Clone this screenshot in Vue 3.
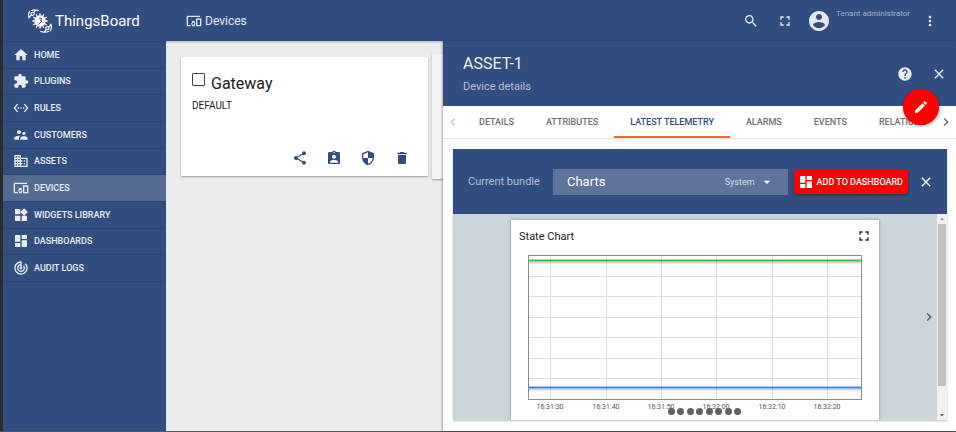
<script setup>
import { ref } from 'vue'

const icons = {
  home: 'M10 20v-6h4v6h5v-8h3L12 3 2 12h3v8z',
  extension: 'M20.5 11H19V7c0-1.1-.9-2-2-2h-4V3.5C13 2.12 11.88 1 10.5 1S8 2.12 8 3.5V5H4c-1.1 0-1.99.9-1.99 2v3.8H3.5c1.49 0 2.7 1.21 2.7 2.7s-1.21 2.7-2.7 2.7H2V20c0 1.1.9 2 2 2h3.8v-1.5c0-1.49 1.21-2.7 2.7-2.7 1.49 0 2.7 1.21 2.7 2.7V22H17c1.1 0 2-.9 2-2v-4h1.5c1.38 0 2.5-1.12 2.5-2.5S21.88 11 20.5 11z',
  ethernet: 'M7.77 6.76L6.23 5.48.82 12l5.41 6.52 1.54-1.28L3.42 12l4.35-5.24zM7 13h2v-2H7v2zm10-2h-2v2h2v-2zm-6 2h2v-2h-2v2zm6.77-7.52l-1.54 1.28L20.58 12l-4.35 5.24 1.54 1.28L23.18 12l-5.41-6.52z',
  supervisor: 'M16.5 12c1.38 0 2.49-1.12 2.49-2.5S17.88 7 16.5 7C15.12 7 14 8.12 14 9.5s1.12 2.5 2.5 2.5zM9 11c1.66 0 2.99-1.34 2.99-3S10.66 5 9 5C7.34 5 6 6.34 6 8s1.34 3 3 3zm7.5 3c-1.83 0-5.5.92-5.5 2.75V19h11v-2.25c0-1.83-3.67-2.75-5.5-2.75zM9 13c-2.33 0-7 1.17-7 3.5V19h7v-2.25c0-.85.33-2.34 2.37-3.47C10.5 13.1 9.66 13 9 13z',
  domain: 'M12 7V3H2v18h20V7H12zM6 19H4v-2h2v2zm0-4H4v-2h2v2zm0-4H4V9h2v2zm0-4H4V5h2v2zm4 12H8v-2h2v2zm0-4H8v-2h2v2zm0-4H8V9h2v2zm0-4H8V5h2v2zm10 12h-8v-2h2v-2h-2v-2h2v-2h-2V9h8v10zm-2-8h-2v2h2v-2zm0 4h-2v2h2v-2z',
  devices: 'M3 6h18V4H3c-1.1 0-2 .9-2 2v12c0 1.1.9 2 2 2h4v-2H3V6zm10 6H9v1.78c-.61.55-1 1.33-1 2.22s.39 1.67 1 2.22V20h4v-1.78c.61-.55 1-1.34 1-2.22s-.39-1.67-1-2.22V12zm-2 5.5c-.83 0-1.5-.67-1.5-1.5s.67-1.5 1.5-1.5 1.5.67 1.5 1.5-.67 1.5-1.5 1.5zM22 8h-6c-.5 0-1 .5-1 1v10c0 .5.5 1 1 1h6c.5 0 1-.5 1-1V9c0-.5-.5-1-1-1zm-1 10h-4v-8h4v8z',
  widgets: 'M13 13v8h8v-8h-8zM3 21h8v-8H3v8zM3 3v8h8V3H3zm13.66-1.31L11 7.34 16.66 13l5.66-5.66-5.66-5.65z',
  dashboard: 'M3 13h8V3H3v10zm0 8h8v-6H3v6zm10 0h8V11h-8v10zm0-18v6h8V3h-8z',
  track: 'M19.07 4.93l-1.41 1.41C19.1 7.79 20 9.79 20 12c0 4.42-3.58 8-8 8s-8-3.58-8-8c0-4.08 3.05-7.44 7-7.93v2.02C8.16 6.57 6 9.03 6 12c0 3.31 2.69 6 6 6s6-2.69 6-6c0-1.66-.67-3.16-1.76-4.24l-1.41 1.41C15.55 9.9 16 10.9 16 12c0 2.21-1.79 4-4 4s-4-1.79-4-4c0-1.86 1.28-3.41 3-3.86v2.14c-.6.35-1 .98-1 1.72 0 1.1.9 2 2 2s2-.9 2-2c0-.74-.4-1.38-1-1.72V2h-1C6.48 2 2 6.48 2 12s4.48 10 10 10 10-4.48 10-10c0-2.76-1.12-5.26-2.93-7.07z',
  search: 'M15.5 14h-.79l-.28-.27C15.41 12.59 16 11.11 16 9.5 16 5.91 13.09 3 9.5 3S3 5.91 3 9.5 5.91 16 9.5 16c1.61 0 3.09-.59 4.23-1.57l.27.28v.79l5 4.99L20.49 19l-4.99-5zm-6 0C7.01 14 5 11.99 5 9.5S7.01 5 9.5 5 14 7.01 14 9.5 11.99 14 9.5 14z',
  fullscreen: 'M7 14H5v5h5v-2H7v-3zm-2-4h2V7h3V5H5v5zm12 7h-3v2h5v-5h-2v3zM14 5v2h3v3h2V5h-5z',
  account: 'M12 2C6.48 2 2 6.48 2 12s4.48 10 10 10 10-4.48 10-10S17.52 2 12 2zm0 3c1.66 0 3 1.34 3 3s-1.34 3-3 3-3-1.34-3-3 1.34-3 3-3zm0 14.2c-2.5 0-4.71-1.28-6-3.22.03-1.99 4-3.08 6-3.08 1.99 0 5.97 1.09 6 3.08-1.29 1.94-3.5 3.22-6 3.22z',
  more: 'M12 8c1.1 0 2-.9 2-2s-.9-2-2-2-2 .9-2 2 .9 2 2 2zm0 2c-1.1 0-2 .9-2 2s.9 2 2 2 2-.9 2-2-.9-2-2-2zm0 6c-1.1 0-2 .9-2 2s.9 2 2 2 2-.9 2-2-.9-2-2-2z',
  help: 'M12 2C6.48 2 2 6.48 2 12s4.48 10 10 10 10-4.48 10-10S17.52 2 12 2zm1 17h-2v-2h2v2zm2.07-7.75l-.9.92C13.45 12.9 13 13.5 13 15h-2v-.5c0-1.1.45-2.1 1.17-2.83l1.24-1.26c.37-.36.59-.86.59-1.41 0-1.1-.9-2-2-2s-2 .9-2 2H8c0-2.21 1.79-4 4-4s4 1.79 4 4c0 .88-.36 1.68-.93 2.25z',
  close: 'M19 6.41L17.59 5 12 10.59 6.41 5 5 6.41 10.59 12 5 17.59 6.41 19 12 13.41 17.59 19 19 17.59 13.41 12z',
  edit: 'M3 17.25V21h3.75L17.81 9.94l-3.75-3.75L3 17.25zM20.71 7.04c.39-.39.39-1.02 0-1.41l-2.34-2.34c-.39-.39-1.02-.39-1.41 0l-1.83 1.83 3.75 3.75 1.83-1.83z',
  share: 'M18 16.08c-.76 0-1.44.3-1.96.77L8.91 12.7c.05-.23.09-.46.09-.7s-.04-.47-.09-.7l7.05-4.11c.54.5 1.25.81 2.04.81 1.66 0 3-1.34 3-3s-1.34-3-3-3-3 1.34-3 3c0 .24.04.47.09.7L8.04 9.81C7.5 9.31 6.79 9 6 9c-1.66 0-3 1.34-3 3s1.34 3 3 3c.79 0 1.5-.31 2.04-.81l7.12 4.16c-.05.21-.08.43-.08.65 0 1.61 1.31 2.92 2.92 2.92 1.61 0 2.92-1.31 2.92-2.92s-1.31-2.92-2.92-2.92z',
  assign: 'M19 3h-4.18C14.4 1.84 13.3 1 12 1c-1.3 0-2.4.84-2.82 2H5c-1.1 0-2 .9-2 2v14c0 1.1.9 2 2 2h14c1.1 0 2-.9 2-2V5c0-1.1-.9-2-2-2zm-7 0c.55 0 1 .45 1 1s-.45 1-1 1-1-.45-1-1 .45-1 1-1zm0 4c1.66 0 3 1.34 3 3s-1.34 3-3 3-3-1.34-3-3 1.34-3 3-3zm6 12H6v-1.4c0-2 4-3.1 6-3.1s6 1.1 6 3.1V19z',
  security: 'M12 1L3 5v6c0 5.55 3.84 10.74 9 12 5.16-1.26 9-6.45 9-12V5l-9-4zm0 10.99h7c-.53 4.12-3.28 7.79-7 8.94V12H5V6.3l7-3.11v8.8z',
  trash: 'M6 19c0 1.1.9 2 2 2h8c1.1 0 2-.9 2-2V7H6v12zM19 4h-3.5l-1-1h-5l-1 1H5v2h14V4z',
  left: 'M15.41 7.41L14 6l-6 6 6 6 1.41-1.41L10.83 12z',
  right: 'M10 6L8.59 7.41 13.17 12l-4.58 4.59L10 18l6-6z',
  down: 'M7 10l5 5 5-5z',
  up: 'M7 14l5-5 5 5z'
}

const menu = [
  { label: 'HOME', icon: 'home' },
  { label: 'PLUGINS', icon: 'extension' },
  { label: 'RULES', icon: 'ethernet' },
  { label: 'CUSTOMERS', icon: 'supervisor' },
  { label: 'ASSETS', icon: 'domain' },
  { label: 'DEVICES', icon: 'devices' },
  { label: 'WIDGETS LIBRARY', icon: 'widgets' },
  { label: 'DASHBOARDS', icon: 'dashboard' },
  { label: 'AUDIT LOGS', icon: 'track' }
]

const cardActions = [
  { label: 'Share', icon: 'share' },
  { label: 'Assign to customer', icon: 'assign' },
  { label: 'Manage credentials', icon: 'security' },
  { label: 'Delete', icon: 'trash' }
]

const tabs = ['DETAILS', 'ATTRIBUTES', 'LATEST TELEMETRY', 'ALARMS', 'EVENTS', 'RELATIONS']
const activeTab = ref('LATEST TELEMETRY')
const bundle = ref('Charts')
const selected = ref(false)

const ticks = [
  { x: 22, label: '16:31:30' },
  { x: 78, label: '16:31:40' },
  { x: 133, label: '16:31:50' },
  { x: 188, label: '16:32:00' },
  { x: 244, label: '16:32:10' },
  { x: 299, label: '16:32:20' }
]
const rows = [21, 41, 62, 82, 103, 123]
const teeth = Array.from({ length: 12 }, (_, i) => i * 30)
</script>

<template>
  <div class="shell">
    <div class="edge"></div>

    <aside class="sidebar">
      <a class="brand" href="#home">
        <svg class="logo" viewBox="0 0 24 24" aria-hidden="true">
          <g fill="none" stroke="#fff" stroke-linecap="round">
            <circle cx="4.6" cy="4.8" r="1.6" stroke-width="1.1" />
            <path d="M1 8.8C.4 6.5.6 4 1.700 2.200M5.800 3.600L7.300 1.500M3.400 1.500C5.500.7 8 .8 10.300 1.600M3.300 5.900L1.300 8.400" stroke-width="1.2" />
            <circle cx="19.4" cy="19.2" r="1.6" stroke-width="1.1" />
            <path d="M23 15.200C23.600 17.500 23.400 20 22.300 21.800M18.200 20.400L16.700 22.500M20.600 22.500C18.500 23.300 15.500 23.400 12.700 22.500M20.700 18.100L22.700 15.600" stroke-width="1.2" />
            <path v-for="t in teeth" :key="t" d="M12 4.800V8" stroke-width="1.3" :transform="`rotate(${t} 12 12)`" />
          </g>
          <circle cx="12" cy="12" r="5.7" fill="#fff" />
          <path d="M11 9L13.600 9.500 12.600 11.500 14 12 10.700 15.300" fill="none" stroke="#324d80" stroke-width="1" />
        </svg>
        <span>ThingsBoard</span>
      </a>
      <nav class="menu">
        <a v-for="item in menu" :key="item.label" href="#" class="menu-item" :class="{ active: item.label === 'DEVICES' }">
          <svg class="icon" viewBox="0 0 24 24"><path :d="icons[item.icon]" /></svg>
          <span>{{ item.label }}</span>
        </a>
      </nav>
    </aside>

    <div class="main">
      <header class="topbar">
        <h1 class="page-title">
          <svg class="icon" viewBox="0 0 24 24"><path :d="icons.devices" /></svg>
          <span>Devices</span>
        </h1>
        <button class="plain" aria-label="Search"><svg class="icon" viewBox="0 0 24 24"><path :d="icons.search" /></svg></button>
        <button class="plain full" aria-label="Fullscreen"><svg class="icon" viewBox="0 0 24 24"><path :d="icons.fullscreen" /></svg></button>
        <svg class="avatar" viewBox="0 0 24 24"><path :d="icons.account" /></svg>
        <span class="role">Tenant administrator</span>
        <button class="plain" aria-label="More"><svg class="icon" viewBox="0 0 24 24"><path :d="icons.more" /></svg></button>
      </header>

      <div class="content">
        <section class="cards">
          <article class="card">
            <div class="card-head">
              <input id="pick" v-model="selected" type="checkbox" class="check" />
              <label for="pick" class="card-title">Gateway</label>
            </div>
            <p class="card-type">DEFAULT</p>
            <div class="card-actions">
              <button v-for="a in cardActions" :key="a.icon" class="plain" :aria-label="a.label">
                <svg class="icon" viewBox="0 0 24 24"><path :d="icons[a.icon]" /></svg>
              </button>
            </div>
          </article>
          <article class="card current"></article>
        </section>

        <section class="drawer">
          <header class="drawer-head">
            <div class="drawer-titles">
              <h2>ASSET-1</h2>
              <p>Device details</p>
            </div>
            <button class="plain" aria-label="Help"><svg class="icon" viewBox="0 0 24 24"><path :d="icons.help" /></svg></button>
            <button class="plain" aria-label="Close details"><svg class="icon" viewBox="0 0 24 24"><path :d="icons.close" /></svg></button>
            <button class="fab" aria-label="Edit"><svg class="icon" viewBox="0 0 24 24"><path :d="icons.edit" /></svg></button>
          </header>

          <div class="tabs">
            <button class="page-btn off" aria-label="Previous tabs"><svg class="icon" viewBox="0 0 24 24"><path :d="icons.left" /></svg></button>
            <div class="tab-list">
              <button v-for="t in tabs" :key="t" class="tab" :class="{ active: t === activeTab }" @click="activeTab = t">{{ t }}</button>
            </div>
            <button class="page-btn" aria-label="Next tabs"><svg class="icon" viewBox="0 0 24 24"><path :d="icons.right" /></svg></button>
          </div>

          <div class="panel">
            <div class="panel-head">
              <label for="bundle" class="bundle-label">Current bundle</label>
              <div class="select-box">
                <select id="bundle" v-model="bundle">
                  <option>Charts</option>
                </select>
                <span class="select-note">System</span>
                <svg class="icon caret" viewBox="0 0 24 24"><path :d="icons.down" /></svg>
              </div>
              <button class="add">
                <svg class="icon" viewBox="0 0 24 24"><path :d="icons.dashboard" /></svg>
                <span>ADD TO DASHBOARD</span>
              </button>
              <button class="plain" aria-label="Close widgets"><svg class="icon" viewBox="0 0 24 24"><path :d="icons.close" /></svg></button>
            </div>

            <div class="panel-body">
              <div class="widget">
                <div class="widget-head">
                  <h3>State Chart</h3>
                  <button class="plain" aria-label="Expand chart"><svg class="icon" viewBox="0 0 24 24"><path :d="icons.fullscreen" /></svg></button>
                </div>
                <svg class="chart" viewBox="0 0 334 165">
                  <g stroke="#dedede" stroke-width="1">
                    <path v-for="t in ticks" :key="t.x" :d="`M${t.x + 0.5} 1V144`" />
                    <path v-for="r in rows" :key="r" :d="`M1 ${r + 0.5}H333`" />
                  </g>
                  <path d="M1 7.500H333M1 134.500H333" stroke="#000" stroke-opacity=".16" stroke-width="2" />
                  <path d="M1 5.500H333" stroke="#3cc04c" stroke-width="2" />
                  <path d="M1 132.500H333" stroke="#3f83ee" stroke-width="2" />
                  <rect x=".5" y=".5" width="333" height="144" fill="none" stroke="#8c8c8c" />
                  <text v-for="t in ticks" :key="t.label" :x="t.x" y="154" class="tick">{{ t.label }}</text>
                </svg>
              </div>
              <div class="dots">
                <i v-for="n in 8" :key="n"></i>
              </div>
              <button class="plain next" aria-label="Next widget"><svg class="icon" viewBox="0 0 24 24"><path :d="icons.right" /></svg></button>
              <div class="scroll" aria-hidden="true">
                <svg viewBox="0 0 24 24"><path :d="icons.up" fill="#8a8a8a" /></svg>
                <div class="thumb"></div>
                <svg viewBox="0 0 24 24"><path :d="icons.down" fill="#444" /></svg>
              </div>
            </div>
          </div>
        </section>
      </div>
    </div>
  </div>
</template>

<style>
body {
  background: #ececec;
}
</style>

<style scoped>
* {
  box-sizing: border-box;
}
h1, h2, h3, p {
  margin: 0;
  font-weight: 400;
}
button {
  font: inherit;
  color: inherit;
  border: 0;
  padding: 0;
  background: none;
  cursor: pointer;
}
a {
  color: inherit;
  text-decoration: none;
}
.shell {
  display: flex;
  min-height: 100vh;
  border-bottom: 1px solid #55565a;
  font-family: Roboto, "Liberation Sans", sans-serif;
  font-size: 9px;
  color: #212121;
}
.icon {
  display: block;
  flex: none;
  width: 16px;
  height: 16px;
  fill: currentColor;
}
.plain {
  display: flex;
  align-items: center;
  justify-content: center;
  flex: none;
}
.edge {
  flex: none;
  width: 3px;
  background: #2b2b2b;
}

.sidebar {
  flex: none;
  width: 163px;
  background: #324d80;
  color: #e9edf4;
}
.brand {
  display: flex;
  align-items: center;
  gap: 3px;
  height: 41px;
  padding-left: 25px;
  font-size: 15px;
  color: #fff;
}
.logo {
  width: 24px;
  height: 24px;
}
.menu {
  display: grid;
  grid-auto-rows: 1fr;
  min-height: 241px;
  border-top: 1px solid #2d4674;
}
.menu-item {
  display: flex;
  align-items: center;
  gap: 5px;
  padding-left: 10px;
  font-weight: 500;
  border-bottom: 1px solid #2d4674;
}
.menu-item.active {
  background: #566b94;
}

.main {
  flex: 1;
  min-width: 0;
  display: flex;
  flex-direction: column;
}
.topbar {
  display: flex;
  align-items: center;
  height: 41px;
  padding: 0 18px 0 20px;
  background: #324d80;
  color: #e3e8f0;
}
.page-title {
  flex: 1;
  display: flex;
  align-items: center;
  gap: 3px;
  font-size: 12px;
}
.full {
  margin: 0 14px 0 18px;
}
.avatar {
  width: 24px;
  height: 24px;
  fill: currentColor;
}
.role {
  align-self: flex-start;
  min-width: 77px;
  margin: 8px 9px 0 5px;
  line-height: 11px;
  font-size: 8px;
  color: #a3b0c8;
}

.content {
  flex: 1;
  display: grid;
  grid-template-columns: 277px 1fr;
}
.cards {
  display: flex;
  align-items: flex-start;
  gap: 4px;
  padding: 13px 0 0 15px;
  overflow: hidden;
  background: #ececec;
  box-shadow: inset 0 2px 2px -1px rgba(0, 0, 0, 0.25);
}
.card {
  flex: none;
  width: 247px;
  height: 119px;
  margin-top: 3px;
  padding: 16px 11px 10px;
  display: flex;
  flex-direction: column;
  background: #fff;
  border-radius: 1px;
  box-shadow: 0 1px 2px rgba(0, 0, 0, 0.35);
}
.card.current {
  height: 125px;
  margin-top: 0;
  background: #f5f5f5;
}
.card-head {
  display: flex;
  gap: 6px;
}
.check {
  appearance: none;
  width: 13px;
  height: 13px;
  margin: 0;
  border: 1px solid #444;
  border-radius: 1px;
}
.check:checked {
  background: #324d80;
}
.card-title {
  font-size: 16px;
  line-height: 21px;
}
.card-type {
  margin-top: 5px;
  font-size: 10px;
  line-height: 14px;
}
.card-actions {
  display: flex;
  justify-content: flex-end;
  gap: 18px;
  margin-top: auto;
  padding-right: 7px;
  color: #324d80;
}

.drawer {
  position: relative;
  min-width: 0;
  background: #fff;
  box-shadow: -1px 0 2px rgba(0, 0, 0, 0.3);
}
.drawer-head {
  position: relative;
  display: flex;
  height: 65px;
  padding: 0 9px 0 20px;
  gap: 18px;
  background: #324d80;
  color: #e9edf4;
}
.drawer-titles {
  flex: 1;
  padding-top: 13px;
}
.drawer-titles h2 {
  font-size: 16px;
  line-height: 20px;
}
.drawer-titles p {
  margin-top: 6px;
  font-size: 11px;
  line-height: 14px;
  color: #b4bed1;
}
.drawer-head > .plain {
  align-self: flex-start;
  margin-top: 25px;
}
.fab {
  position: absolute;
  right: 17px;
  bottom: -19px;
  z-index: 2;
  display: flex;
  align-items: center;
  justify-content: center;
  width: 36px;
  height: 36px;
  border-radius: 50%;
  background: #fe0000;
  color: #fff;
  box-shadow: 0 1px 3px rgba(0, 0, 0, 0.4);
}
.tabs {
  display: flex;
  height: 33px;
  border-bottom: 1px solid #e2e2e2;
}
.page-btn {
  flex: none;
  width: 20px;
  display: flex;
  align-items: center;
  justify-content: center;
  color: #666;
}
.page-btn.off {
  color: #c8c8c8;
}
.tab-list {
  flex: 1;
  min-width: 0;
  display: flex;
  overflow: hidden;
}
.tab {
  flex: none;
  padding: 2px 16px 0;
  font-weight: 500;
  color: #707070;
  border-bottom: 2px solid transparent;
}
.tab.active {
  color: #324d80;
  border-bottom-color: #f4623a;
}

.panel {
  margin: 10px 9px 10px 10px;
  box-shadow: 0 1px 2px rgba(0, 0, 0, 0.25);
}
.panel-head {
  display: flex;
  align-items: center;
  height: 65px;
  padding: 0 13px 0 15px;
  background: #324d80;
  color: #fff;
}
.bundle-label {
  width: 85px;
  font-size: 11px;
  color: #b4bed1;
}
.select-box {
  flex: 1;
  display: grid;
  grid-template-columns: 1fr auto 16px;
  align-items: center;
  gap: 4px;
  height: 26px;
  padding-right: 13px;
  background: #60739b;
}
.select-box select {
  grid-row: 1;
  grid-column: 1 / -1;
  appearance: none;
  height: 26px;
  padding: 0 14px;
  border: 0;
  background: none;
  color: #fff;
  font: 13px Roboto, "Liberation Sans", sans-serif;
}
.select-note {
  grid-row: 1;
  grid-column: 2;
  color: #d5dbe6;
  pointer-events: none;
}
.caret {
  grid-row: 1;
  grid-column: 3;
  pointer-events: none;
}
.add {
  display: flex;
  align-items: center;
  gap: 3px;
  height: 24px;
  margin: 0 10px 0 6px;
  padding: 0 5px 0 4px;
  border-radius: 2px;
  background: #fe0000;
  color: #fff;
  font-weight: 500;
  box-shadow: 0 1px 3px rgba(0, 0, 0, 0.4);
}
.panel-body {
  position: relative;
  display: grid;
  grid-template-columns: 1fr 368px 1fr 10px;
  padding-top: 6px;
  background: #cbd6db;
}
.widget {
  grid-column: 2;
  padding: 8px 17px 0;
  background: #fff;
  box-shadow: 0 0 3px rgba(0, 0, 0, 0.35);
  clip-path: inset(-4px -4px 0 -4px);
}
.widget-head {
  display: flex;
  justify-content: space-between;
  margin: 0 -10px 0 -9px;
  height: 27px;
}
.widget-head h3 {
  font-size: 11px;
  line-height: 17px;
}
.widget-head .plain {
  align-self: flex-start;
}
.chart {
  display: block;
  width: 100%;
}
.tick {
  font-size: 7px;
  fill: #545454;
  text-anchor: middle;
}
.dots {
  position: absolute;
  bottom: 5px;
  left: 215px;
  display: flex;
  justify-content: space-between;
  width: 73px;
}
.dots i {
  width: 7px;
  height: 7px;
  border-radius: 50%;
  background: #616161;
}
.next {
  grid-column: 3;
  align-self: center;
  justify-self: end;
  padding-bottom: 6px;
  color: #555;
}
.scroll {
  grid-column: 4;
  display: flex;
  flex-direction: column;
  margin-top: -6px;
  background: #f1f1f1;
}
.scroll svg {
  width: 10px;
  height: 10px;
}
.thumb {
  height: 162px;
  margin: 0 1px auto;
  background: #c1c1c1;
}
</style>
